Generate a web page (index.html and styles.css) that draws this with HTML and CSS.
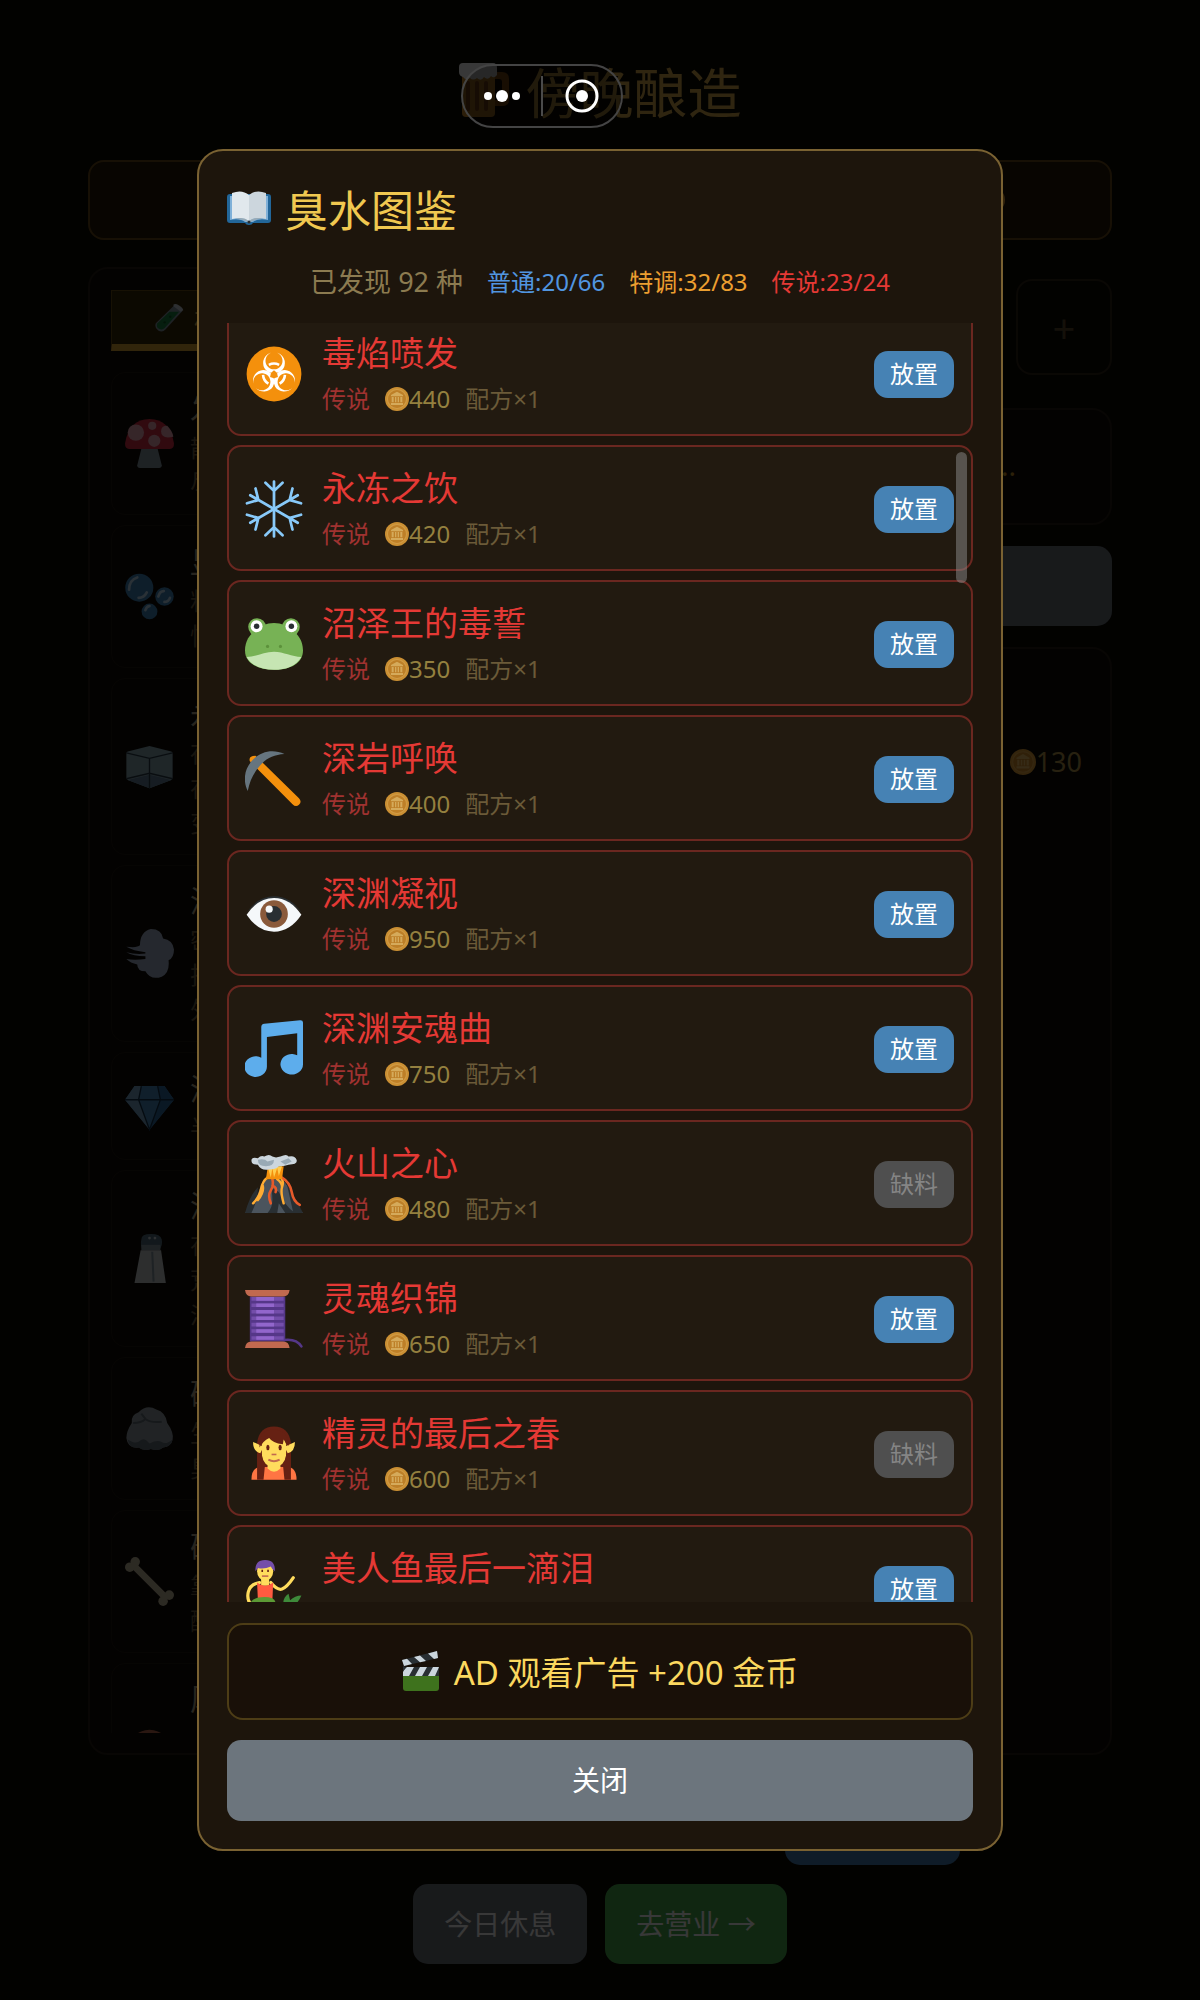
FILE: index.html
```html
<!DOCTYPE html>
<html lang="zh-CN">
<head>
    <meta charset="UTF-8">
    <meta name="viewport" content="width=device-width, initial-scale=1.0">
    <title>傍晚酿造</title>
    <link rel="stylesheet" href="styles.css">
</head>
<body>
    <!-- 图标 -->
    <svg class="sprite" aria-hidden="true">
        <symbol id="i-coin" viewBox="0 0 36 36">
            <circle cx="18" cy="18" r="18" fill="#e8a43a"/>
            <circle cx="18" cy="18" r="15" fill="#f0b350"/>
            <circle cx="18" cy="18" r="13.5" fill="#d9912c"/>
            <path d="M18 7l9 5v2H9v-2zM10 15h3v8h-3zM15 15h2v8h-2zM19 15h2v8h-2zM23 15h3v8h-3zM9 24h18v3H9z" fill="#f5c469"/>
        </symbol>
        <symbol id="i-book" viewBox="0 0 44 34">
            <path d="M3 3h38q3 0 3 3v23q0 3-3 3H26q-1 2-4 2t-4-2H3q-3 0-3-3V6q0-3 3-3z" fill="#226699"/>
            <path d="M3 5h38v24q-10-2-15 2h-8q-5-4-15-2z" fill="#7fb0d8"/>
            <path d="M5 2q10-4 17 2v26q-7-5-17-2z" fill="#e1e8ed"/>
            <path d="M39 2q-10-4-17 2v26q7-5 17-2z" fill="#ccd6dd"/>
            <path d="M8 28q8-3 14 2 6-5 14-2-9 0-14 4-5-4-14-4z" fill="#99aab5"/>
            <circle cx="22" cy="31" r="1.5" fill="#292f33"/>
        </symbol>
        <symbol id="i-bio" viewBox="0 0 36 36">
            <circle cx="18" cy="18" r="17" fill="#f4900c"/>
            <g id="bio-arm">
                <path d="M16.600 4.700A6.600 6.600 0 0 0 12 14.200a6.800 6.800 0 0 0 4.200 3.100l1.800-1.600 1.800 1.600a6.800 6.800 0 0 0 4.200-3.100A6.600 6.600 0 0 0 19.400 4.700a5.300 5.300 0 1 1-2.800 0z" fill="#fff"/>
            </g>
            <use href="#bio-arm" transform="rotate(120 18 18.500)"/>
            <use href="#bio-arm" transform="rotate(240 18 18.500)"/>
            <g fill="none" stroke="#fff" stroke-width="1.600">
                <path d="M14.800 12.300a7 7 0 0 1 6.400 0"/>
                <path d="M11.200 18.500a7 7 0 0 0 3.300 5.500"/>
                <path d="M24.800 18.500a7 7 0 0 1-3.300 5.500"/>
            </g>
            <circle cx="18" cy="18.500" r="1.500" fill="#f4900c"/>
        </symbol>
        <symbol id="i-snow" viewBox="0 0 36 36">
            <g fill="none" stroke="#88c9f9" stroke-width="1.700" stroke-linecap="round">
                <g id="flake">
                    <path d="M18 1v34M12.700 1.700L18 6.800l5.300-5.100M12.700 34.300L18 29.200l5.300 5.100"/>
                </g>
                <use href="#flake" transform="rotate(60 18 18)"/>
                <use href="#flake" transform="rotate(120 18 18)"/>
            </g>
        </symbol>
        <symbol id="i-frog" viewBox="0 0 36 36">
            <circle cx="7.500" cy="7.500" r="5.500" fill="#77b255"/>
            <circle cx="28.500" cy="7.500" r="5.500" fill="#77b255"/>
            <path d="M36 22c0 8-8 12-18 12S0 30 0 22C0 16 3 12 7 9c3-2 6-4 11-4s8 2 11 4c4 3 7 7 7 13z" fill="#77b255"/>
            <path d="M1 26C7 26 12 22.800 18 22.800S29 26 35 26C32 31.500 25.500 34 18 34S4 31.500 1 26z" fill="#c6e5b3"/>
            <circle cx="7.200" cy="7" r="3.700" fill="#fff"/>
            <circle cx="28.800" cy="7" r="3.700" fill="#fff"/>
            <circle cx="7.200" cy="7" r="1.700" fill="#292f33"/>
            <circle cx="28.800" cy="7" r="1.700" fill="#292f33"/>
            <circle cx="14" cy="19.500" r="1" fill="#5c913b"/>
            <circle cx="22" cy="19.500" r="1" fill="#5c913b"/>
        </symbol>
        <symbol id="i-pick" viewBox="0 0 36 36">
            <path d="M3 7q-1-3.500 3.500-3.500l27 26.500q2 2.200 0 4-2 1.800-4-.4z" fill="#f4900c"/>
            <path d="M24.500 2.500C17-1 9 1 4 7-1 13-1 20 1.700 25.500 3 19 5 14.500 9.500 9.500S18 3 24.500 2.500z" fill="#66757f"/>
        </symbol>
        <symbol id="i-eye" viewBox="0 0 36 36">
            <path d="M1 17Q8 7 18 7t17 10Q28 9 18 9T1 17z" fill="#292f33"/>
            <path d="M1 18.500Q8 8 18 8t17 10.500Q28 29 18 29T1 18.500z" fill="#f5f8fa"/>
            <circle cx="18" cy="18" r="8.600" fill="#8a5a3b"/>
            <circle cx="18" cy="18" r="4.900" fill="#292f33"/>
            <circle cx="15" cy="15" r="2.200" fill="#f5f8fa"/>
        </symbol>
        <symbol id="i-music" viewBox="0 0 36 36">
            <path d="M34.200.1L12 2.400q-1.900.2-1.900 2v19a7 6.400 0 1 0 3.500 5.600V10.500L32.400 8.300v13.600a7 6.400 0 1 0 3.600 5.500V1.500q0-1.500-1.800-1.400z" fill="#5dadec"/>
        </symbol>
        <symbol id="i-volcano" viewBox="0 0 36 36">
            <path d="M0 36Q6 30 8 24t4-9h11q4 4 6 10t7 11z" fill="#4b545d"/>
            <path d="M0 36q3-11 8-16 0 8-4 16zM14 36q3-3 3-8t-1-8l5 3q4 9 10 13h-6l-4-6-1 6zM26 18q6 10 10 18h-6z" fill="#292f33"/>
            <g fill="none" stroke-linecap="round" stroke-linejoin="round">
                <path d="M14 14q-3 2-4 7t-5 9M11 19q1 4-3 9M23 15q1 2 0 5t1 10M20 15q3 2 3 5" stroke="#ffac33" stroke-width="1.500"/>
                <path d="M17 15q1 4-1 7t0 8M17 19q3 1 2 4M23 14q5 3 6 9t5 8" stroke="#e75a2a" stroke-width="1.600"/>
            </g>
            <path d="M14 8l10-1-1 8H13z" fill="#f4900c"/>
            <path d="M14 7l2 7 1-6 1 6 2-6 1 5 2-6z" fill="#ffcc4d"/>
            <path d="M8 6q-4 0-4-2.500T8 2q2-2 4-1 3-2 5 0 2 1 5 0 4-2 5 0 4-1 5 2t-5 3q-3 1-6 1-2 2-6 2-5 1-7-3z" fill="#ccd6dd"/>
            <path d="M8 3q4-1 6 1l4-1q0 4-5 4T8 3zM22 4l5-2 2 2-4 2z" fill="#99aab5"/>
        </symbol>
        <symbol id="i-thread" viewBox="0 0 36 36">
            <path d="M24 31q8-1 11 4" fill="none" stroke="#553788" stroke-width="1.600" stroke-linecap="round"/>
            <path d="M3 4h22v28H3z" fill="#553788"/>
            <path d="M4 5.500h20M4 9.500h20M4 13.500h20M4 17.500h20M4 21.500h20M4 25.500h20M4 29.800h20" stroke="#744eaa" stroke-width="2.200"/>
            <path d="M7 5.500h11M7 9.500h11M7 13.500h11M7 17.500h11M7 21.500h11M7 25.500h11M7 29.800h11" stroke="#9266cc" stroke-width="2.200"/>
            <path d="M0 0h27.700q-.5 4-4 4H4Q.5 4 0 0zM0 36q.5-4 4-4h19.700q3.500 0 4 4z" fill="#c1694f"/>
        </symbol>
        <symbol id="i-elf" viewBox="0 0 36 36">
            <path d="M7.500 34V11Q9 1 18 1t10.500 10v23z" fill="#662113"/>
            <path d="M4 34q0-8 6-8h16q6 0 6 8z" fill="#ff7543"/>
            <path d="M14 24h8v3q-4 4-8 0z" fill="#ffdc5d"/>
            <path d="M5 10.500q0 6 4.500 7l2-4zM31 10.500q0 6-4.500 7l-2-4z" fill="#ffdc5d"/>
            <path d="M10.500 12Q11 6 18 6t7.500 6v7q-1 7-7.500 7t-7.500-7z" fill="#ffdc5d"/>
            <path d="M9 14Q8 3 18 3q9 0 9 10-2-2-3-4l-.5 3Q17 11 15 8q-4 2-6 6z" fill="#662113"/>
            <ellipse cx="14.200" cy="14" rx="1" ry="1.700" fill="#662113"/>
            <ellipse cx="21.800" cy="14" rx="1" ry="1.700" fill="#662113"/>
            <path d="M16.500 18.300h3" stroke="#c1694f" stroke-width="1"/>
            <path d="M14.500 21.500q3.500 2 7 0" fill="none" stroke="#c1694f" stroke-width="1.200"/>
            <path d="M7.500 18h3q0 4 2 6-.5 5-1 10h-4zM28.500 18h-3q0 4-2 6 .5 5 1 10h4z" fill="#662113"/>
        </symbol>
        <symbol id="i-mermaid" viewBox="0 0 36 36">
            <path d="M9 14q-6 1-7 6t2 8" fill="none" stroke="#ffdc5d" stroke-width="2" stroke-linecap="round"/>
            <path d="M16 14q4 5 7 4t7-7" fill="none" stroke="#ffdc5d" stroke-width="2" stroke-linecap="round"/>
            <path d="M10 10h5v6h-5z" fill="#ffdc5d"/>
            <path d="M7.500 14q3 2 5 2t5-2l-.5 11h-9z" fill="#ff5a40"/>
            <ellipse cx="12.500" cy="7" rx="5" ry="6" fill="#ffdc5d"/>
            <path d="M6.500 7Q6 0 12.500 0t6 7Q17 6 16 4q-4 2-8 1z" fill="#744eaa"/>
            <path d="M10.700 6v1.500M14.300 6v1.500" stroke="#662113" stroke-width="1"/>
            <path d="M10.500 10h4" stroke="#c1694f" stroke-width="1"/>
            <path d="M3 27q2-4 9-4t7 4q1 5-4 9H8z" fill="#5c9a35"/>
            <path d="M24 28q-1-4 3-7l1 4q3-3 7-3-2 5-6 7z" fill="#3e8a3a"/>
        </symbol>
        <symbol id="i-clap" viewBox="0 0 38 40">
            <path d="M1 25h36v12q0 3-3 3H4q-3 0-3-3z" fill="#3e721d"/>
            <path d="M1 16h36v9H1z" fill="#292f33"/>
            <path d="M1 20l4-4h7l-5 9H1zM18 16h7l-5 9h-7zM31 16h6l-4 9h-7z" fill="#ccd6dd"/>
            <path d="M0 9L35 0l1 7L2 15z" fill="#292f33"/>
            <path d="M0 9l5-1.300 5 5.300-8 2zM12 6l6-1.600 6 5.500-6 1.400zM26 2.400L35 0l1 7-4 1z" fill="#ccd6dd"/>
            <path d="M1 15l3 1-3 5z" fill="#292f33"/>
        </symbol>
        <symbol id="i-mug" viewBox="0 0 50 54">
            <path d="M34 9h9q7 0 7 7v21q0 6-7 6h-9v-6h6q3 0 3-3V19q0-3-3-3h-6z" fill="#9a5b16"/>
            <path d="M3 10h33v40q0 4-4 4H7q-4 0-4-4z" fill="#c98a2a"/>
            <path d="M9 20v26M18 20v26M27 20v26" stroke="#93501a" stroke-width="4" stroke-linecap="round"/>
            <path d="M4 0h30q4 0 4 5v7q-3 4-6 1-3 5-7 1-3 5-7 1-4 3-7 0-4 3-7-1-4-1-4-5V4q0-4 4-4z" fill="#fff"/>
        </symbol>
        <symbol id="i-tube" viewBox="0 0 36 36">
            <path d="M25 2l9 8L13 33q-4 4-9 1t-3-9z" fill="#8899a6"/>
            <path d="M18 11h12L12 31q-3 3-7 1t-2-7z" fill="#1f8a45"/>
            <path d="M23 2q2-2 7 1t5 6l-3 2-9-7z" fill="#ccd6dd"/>
            <circle cx="12" cy="24" r="1.500" fill="#0f5a28"/>
            <circle cx="19" cy="17" r="1.500" fill="#0f5a28"/>
        </symbol>
        <symbol id="i-mushroom" viewBox="0 0 36 36">
            <path d="M12 22h12l3 12q0 2-2 2H11q-2 0-2-2z" fill="#8899a6"/>
            <path d="M0 18Q3 0 18 0t18 18q0 4-3 4H3q-3 0-3-4z" fill="#dd2e44"/>
            <g fill="#f4abba">
                <circle cx="8" cy="10" r="6"/>
                <circle cx="20" cy="5" r="3"/>
                <circle cx="21.500" cy="16" r="4.500"/>
                <path d="M31 5q4 4 4.500 8-9 2-9-4 0-4 4.500-4z"/>
            </g>
        </symbol>
        <symbol id="i-bubble" viewBox="0 0 36 36">
            <g fill="#4289c1">
                <circle cx="10.500" cy="11.500" r="10.300"/>
                <circle cx="29" cy="18" r="6.800"/>
                <circle cx="18" cy="29" r="5.800"/>
            </g>
            <g fill="none" stroke="#bdddf4" stroke-width="2" stroke-linecap="round">
                <path d="M3 13q0-7 6-9M16 15q-2 4-6 4M24.500 18q1-4 4-4M33 19q-1 3-4 3M15 28q1-3 3-3"/>
            </g>
        </symbol>
        <symbol id="i-ice" viewBox="0 0 36 36">
            <path d="M18 3l16 4q1 0 1 2v17q0 1-1 2l-16 6-16-6q-1-1-1-2V9q0-2 1-2z" fill="#8cabb8"/>
            <path d="M18 24l16 4-16 6-16-6z" fill="#648299"/>
            <path d="M1 8l17 4 17-4M18 12v22M1 27l17-4 17 4" fill="none" stroke="#2c3e4a" stroke-width="1"/>
        </symbol>
        <symbol id="i-wind" viewBox="0 0 36 36">
            <path d="M1 13q8 1 10-1 0-10 8-12 8 0 9 7 7 1 8 8 0 6-4 8 1 9-5 12-8 3-12-4-6 0-6-5-5-1-8-4 6 1 14 0v-2Q6 20 1 17q7 2 14 1v-1Q6 16 1 13z" fill="#a8b6d0"/>
        </symbol>
        <symbol id="i-gem" viewBox="0 0 36 36">
            <path d="M7 3h22l7 10-18 22L0 13z" fill="#4a8fc4"/>
            <path d="M7 3h5l-2 10H0zM10 13l8 22L0 13z" fill="#7aa8cc"/>
            <path d="M29 3l7 10L18 35l8-22-2-10z" fill="#2f6da5"/>
            <path d="M0 13h36M12 3l-2 10 8 22 8-22-2-10" fill="none" stroke="#16334d" stroke-width="1"/>
        </symbol>
        <symbol id="i-salt" viewBox="0 0 36 36">
            <path d="M12 4q0-4 7-4t8 4-2 8H13q-2-4-1-8z" fill="#55707f"/>
            <path d="M12 8h14v4H12z" fill="#8899a6"/>
            <path d="M11.500 12h15L30 36H7z" fill="#ccd0d3"/>
            <path d="M20 13l1 22" stroke="#8899a6" stroke-width="1.500"/>
            <circle cx="18" cy="3" r="1" fill="#ccd6dd"/>
            <circle cx="22" cy="3" r="1" fill="#ccd6dd"/>
        </symbol>
        <symbol id="i-rock" viewBox="0 0 36 36">
            <path d="M5 14q-1-6 5-8 6-6 13-2 7 2 8 10 5 7 4 12-1 5-7 6-3 3-9 1-5 2-9-1-8 1-9-7 0-5 4-11z" fill="#97a1a9"/>
            <path d="M2 26q6 4 9 1t7 2q6-3 9-1t8-2q-1 5-7 6-3 3-9 1-5 2-9-1-7 1-8-6z" fill="#65717b"/>
            <path d="M6 14q6 0 9-3 4 3 12 2M15 11l-3-4" fill="none" stroke="#65717b" stroke-width="1.500"/>
        </symbol>
        <symbol id="i-bone" viewBox="0 0 36 36">
            <path d="M6 6l25 25" stroke="#c9bda0" stroke-width="5"/>
            <g fill="#c9bda0">
                <circle cx="3.500" cy="7.500" r="3.500"/>
                <circle cx="7.500" cy="3.500" r="3.500"/>
                <circle cx="28" cy="32.500" r="3.500"/>
                <circle cx="32.500" cy="28" r="3.500"/>
            </g>
        </symbol>
        <symbol id="i-nut" viewBox="0 0 36 36">
            <circle cx="18" cy="18" r="16" fill="#c1694f"/>
        </symbol>
    </svg>

    <div class="app">
        <h1 class="page-title"><svg class="mug"><use href="#i-mug"/></svg>傍晚酿造</h1>

        <div class="status-bar"><svg class="coin"><use href="#i-coin"/></svg></div>

        <main class="workbench">
            <section class="panel materials">
                <div class="tabs"><button class="tab active"><svg><use href="#i-tube"/></svg>材料</button></div>
                <ul class="material-list">
                    <li class="material h3"><svg><use href="#i-mushroom"/></svg><div><b>发</b><p>散</p><p>尽</p></div></li>
                    <li class="material h3"><svg><use href="#i-bubble"/></svg><div><b>显</b><p>粘</p><p>性</p></div></li>
                    <li class="material h4"><svg><use href="#i-ice"/></svg><div><b>永</b><p>存</p><p>在</p><p>变</p></div></li>
                    <li class="material h4"><svg><use href="#i-wind"/></svg><div><b>深</b><p>密</p><p>把</p><p>外</p></div></li>
                    <li class="material h2"><svg><use href="#i-gem"/></svg><div><b>深</b><p>半</p></div></li>
                    <li class="material h4"><svg><use href="#i-salt"/></svg><div><b>深</b><p>在</p><p>荒</p><p>淡</p></div></li>
                    <li class="material h3"><svg><use href="#i-rock"/></svg><div><b>硫</b><p>生</p><p>臭</p></div></li>
                    <li class="material h3"><svg><use href="#i-bone"/></svg><div><b>硬</b><p>靠</p><p>醋</p></div></li>
                    <li class="material h4"><svg><use href="#i-nut"/></svg><div><b>厚</b><p>&nbsp;</p><p>&nbsp;</p><p>&nbsp;</p></div></li>
                </ul>
            </section>

            <section class="brewing">
                <div class="slots"><button class="slot" aria-label="添加">+</button></div>
                <div class="panel hint">...</div>
                <button class="btn btn-gray" aria-label="酿造"></button>
                <div class="panel stock">
                    <span class="price"><svg class="coin"><use href="#i-coin"/></svg>130</span>
                </div>
            </section>
        </main>

        <div class="actions tools"><button class="btn btn-blue" aria-label="图鉴"></button></div>
        <div class="actions">
            <button class="btn btn-gray">今日休息</button>
            <button class="btn btn-green">去营业 →</button>
        </div>
    </div>

    <div class="overlay">
        <div class="modal" role="dialog" aria-labelledby="bookTitle">
            <h2 id="bookTitle"><svg class="book"><use href="#i-book"/></svg>臭水图鉴</h2>
            <div class="stats">
                <span class="found">已发现 92 种</span>
                <span class="common">普通:20/66</span>
                <span class="special">特调:32/83</span>
                <span class="legend">传说:23/24</span>
            </div>

            <div class="list-wrap">
                <ul class="drinks">
                    <li class="drink">
                        <svg><use href="#i-bio"/></svg>
                        <div class="info"><h3>毒焰喷发</h3><p><span class="rare">传说</span><span class="gold"><svg class="coin"><use href="#i-coin"/></svg>440</span><span>配方×1</span></p></div>
                        <button class="place">放置</button>
                    </li>
                    <li class="drink">
                        <svg><use href="#i-snow"/></svg>
                        <div class="info"><h3>永冻之饮</h3><p><span class="rare">传说</span><span class="gold"><svg class="coin"><use href="#i-coin"/></svg>420</span><span>配方×1</span></p></div>
                        <button class="place">放置</button>
                    </li>
                    <li class="drink">
                        <svg><use href="#i-frog"/></svg>
                        <div class="info"><h3>沼泽王的毒誓</h3><p><span class="rare">传说</span><span class="gold"><svg class="coin"><use href="#i-coin"/></svg>350</span><span>配方×1</span></p></div>
                        <button class="place">放置</button>
                    </li>
                    <li class="drink">
                        <svg><use href="#i-pick"/></svg>
                        <div class="info"><h3>深岩呼唤</h3><p><span class="rare">传说</span><span class="gold"><svg class="coin"><use href="#i-coin"/></svg>400</span><span>配方×1</span></p></div>
                        <button class="place">放置</button>
                    </li>
                    <li class="drink">
                        <svg><use href="#i-eye"/></svg>
                        <div class="info"><h3>深渊凝视</h3><p><span class="rare">传说</span><span class="gold"><svg class="coin"><use href="#i-coin"/></svg>950</span><span>配方×1</span></p></div>
                        <button class="place">放置</button>
                    </li>
                    <li class="drink">
                        <svg><use href="#i-music"/></svg>
                        <div class="info"><h3>深渊安魂曲</h3><p><span class="rare">传说</span><span class="gold"><svg class="coin"><use href="#i-coin"/></svg>750</span><span>配方×1</span></p></div>
                        <button class="place">放置</button>
                    </li>
                    <li class="drink">
                        <svg><use href="#i-volcano"/></svg>
                        <div class="info"><h3>火山之心</h3><p><span class="rare">传说</span><span class="gold"><svg class="coin"><use href="#i-coin"/></svg>480</span><span>配方×1</span></p></div>
                        <button class="place" disabled>缺料</button>
                    </li>
                    <li class="drink">
                        <svg><use href="#i-thread"/></svg>
                        <div class="info"><h3>灵魂织锦</h3><p><span class="rare">传说</span><span class="gold"><svg class="coin"><use href="#i-coin"/></svg>650</span><span>配方×1</span></p></div>
                        <button class="place">放置</button>
                    </li>
                    <li class="drink">
                        <svg><use href="#i-elf"/></svg>
                        <div class="info"><h3>精灵的最后之春</h3><p><span class="rare">传说</span><span class="gold"><svg class="coin"><use href="#i-coin"/></svg>600</span><span>配方×1</span></p></div>
                        <button class="place" disabled>缺料</button>
                    </li>
                    <li class="drink">
                        <svg><use href="#i-mermaid"/></svg>
                        <div class="info"><h3>美人鱼最后一滴泪</h3></div>
                        <button class="place">放置</button>
                    </li>
                </ul>
                <div class="scrollbar"></div>
            </div>

            <button class="ad-btn"><svg><use href="#i-clap"/></svg>AD 观看广告 +200 金币</button>
            <button class="close-btn">关闭</button>
        </div>
    </div>

    <!-- 小程序胶囊按钮 -->
    <div class="capsule">
        <button aria-label="更多">
            <svg width="36" height="16" viewBox="0 0 36 16" fill="#fff"><circle cx="4" cy="8" r="4"/><circle cx="18" cy="8" r="6"/><circle cx="32" cy="8" r="4"/></svg>
        </button>
        <i></i>
        <button aria-label="关闭小程序">
            <svg width="36" height="36" viewBox="0 0 36 36"><circle cx="18" cy="18" r="15" fill="none" stroke="#fff" stroke-width="3"/><circle cx="18" cy="18" r="6" fill="#fff"/></svg>
        </button>
    </div>
</body>
</html>
```

FILE: styles.css
```css
* {
    box-sizing: border-box;
    margin: 0;
    padding: 0;
}

body {
    font-family: 'Noto Sans', 'Noto Sans CJK SC', sans-serif;
    background-color: #0d0904;
    color: #fff;
    font-size: 24px;
}

ul {
    list-style: none;
}

button {
    font-family: inherit;
    border: none;
    color: #fff;
    cursor: pointer;
}

svg {
    display: block;
    flex-shrink: 0;
}

.sprite {
    position: absolute;
    width: 0;
    height: 0;
}

/* 酿造页面 */
.app {
    display: flex;
    flex-direction: column;
    min-height: 100vh;
    padding: 58px 88px 36px;
}

.page-title {
    display: flex;
    align-items: center;
    justify-content: center;
    gap: 17px;
    height: 64px;
    font-size: 54px;
    font-weight: 400;
    color: #d4a84b;
}

.mug {
    width: 50px;
    height: 54px;
}

.status-bar {
    display: flex;
    align-items: center;
    justify-content: flex-end;
    height: 80px;
    margin-top: 38px;
    padding-right: 105px;
    border: 2px solid #6b4a18;
    border-radius: 16px;
    background-color: #241805;
}

.coin {
    width: 26px;
    height: 26px;
}

.workbench {
    display: grid;
    grid-template-columns: 1fr 1fr;
    gap: 20px;
    flex: 1;
    min-height: 0;
    margin-top: 27px;
}

.panel {
    border: 2px solid #241c12;
    border-radius: 20px;
    background-color: #0f0b06;
}

.materials {
    height: 1488px;
    padding: 21px;
}

.tab {
    display: flex;
    align-items: center;
    gap: 10px;
    width: 200px;
    height: 61px;
    padding-left: 43px;
    background-color: #3a2a08;
    border: 1px solid #6b4f16;
    border-bottom: 7px solid #e0a834;
    color: #d4a84b;
    font-size: 26px;
}

.tab svg {
    width: 29px;
    height: 29px;
}

.material-list {
    display: flex;
    flex-direction: column;
    gap: 10px;
    height: 1361px;
    margin-top: 21px;
    overflow: hidden;
}

.material {
    display: flex;
    flex-shrink: 0;
    align-items: center;
    gap: 16px;
    padding: 0 13px;
    border: 1px solid #1f1810;
    border-radius: 14px;
    color: #b0a488;
}

.material svg {
    width: 49px;
    height: 49px;
}

.material b {
    display: block;
    font-size: 30px;
    font-weight: 400;
    line-height: 42px;
}

.material p {
    color: #6b5c40;
    line-height: 35px;
}

.h2 {
    height: 108px;
}

.h3 {
    height: 143px;
}

.h4 {
    height: 177px;
}

.brewing {
    display: flex;
    flex-direction: column;
    gap: 21px;
    padding-top: 12px;
}

.slots {
    display: flex;
    justify-content: flex-end;
    margin-bottom: 12px;
}

.slot {
    width: 96px;
    height: 96px;
    background: none;
    border: 2px solid #2e2416;
    border-radius: 16px;
    color: #5a4a2c;
    font-size: 40px;
}

.hint {
    height: 117px;
    padding: 37px 94px;
    color: #c9952c;
    font-size: 28px;
    line-height: 36px;
    text-align: right;
}

.stock {
    flex: 1;
    padding: 94px 28px;
}

.price {
    display: flex;
    align-items: center;
    justify-content: flex-end;
    color: #b5984c;
    font-size: 27px;
    line-height: 38px;
}

.actions {
    display: flex;
    justify-content: center;
    gap: 18px;
    margin-top: 19px;
}

.tools {
    justify-content: flex-end;
    margin-top: 30px;
    padding-right: 152px;
}

.btn {
    height: 80px;
    padding: 0 31px 3px;
    border-radius: 15px;
    font-size: 28px;
}

.btn-gray {
    background-color: #6c757d;
}

.btn-blue {
    width: 175px;
    background-color: #4682b4;
}

.btn-green {
    background-color: #4caf50;
}

/* 图鉴弹窗 */
.overlay {
    position: fixed;
    inset: 0;
    display: flex;
    align-items: center;
    justify-content: center;
    background-color: rgba(0, 0, 0, 0.78);
}

.modal {
    display: flex;
    flex-direction: column;
    width: calc(67% + 2px);
    height: 85.1vh;
    padding: 28px;
    border: 2px solid #7a6232;
    border-radius: 26px;
    background-color: #1d150c;
}

.modal h2 {
    display: flex;
    align-items: center;
    gap: 14px;
    height: 58px;
    font-size: 43px;
    font-weight: 400;
    color: #f0c850;
}

.book {
    width: 44px;
    height: 34px;
}

.stats {
    display: flex;
    align-items: center;
    justify-content: center;
    gap: 24px;
    height: 40px;
    margin: 23px 0;
}

.found {
    color: #8c7b50;
    font-size: 27px;
}

.common {
    color: #5195e0;
}

.special {
    color: #ec9f30;
}

.legend {
    color: #e53935;
}

.list-wrap {
    position: relative;
    flex: 1;
    min-height: 0;
    overflow: hidden;
}

.drinks {
    display: flex;
    flex-direction: column;
    gap: 9px;
    margin-top: -13px;
}

.drink {
    display: flex;
    flex-shrink: 0;
    align-items: center;
    gap: 19px;
    height: 126px;
    padding: 18px 17px 16px 16px;
    border: 2px solid #6b2720;
    border-radius: 14px;
    background-color: #221a10;
}

.drink > svg {
    width: 58px;
    height: 58px;
}

.info {
    flex: 1;
    height: 86px;
}

.info h3 {
    color: #e53935;
    font-size: 34px;
    font-weight: 400;
    line-height: 44px;
}

.info p {
    display: flex;
    gap: 15px;
    margin-top: 6px;
    color: #6b5a38;
    line-height: 36px;
}

.info .rare {
    color: #a03230;
}

.info .gold {
    display: flex;
    align-items: center;
    color: #94803f;
}

.info .coin {
    width: 24px;
    height: 24px;
    opacity: 0.85;
}

.place {
    width: 80px;
    height: 47px;
    padding-bottom: 1px;
    border-radius: 14px;
    background-color: #4682b4;
    font-size: 24px;
    line-height: 36px;
}

.place:disabled {
    background-color: #4f4f4f;
    color: #858585;
    cursor: not-allowed;
}

.scrollbar {
    position: absolute;
    top: 129px;
    right: 6px;
    width: 11px;
    height: 131px;
    border-radius: 6px;
    background-color: rgba(140, 140, 140, 0.5);
}

.ad-btn {
    display: flex;
    align-items: center;
    justify-content: center;
    gap: 14px;
    height: 97px;
    margin-top: 21px;
    padding-bottom: 2px;
    border: 2px solid #4d3d16;
    border-radius: 16px;
    background-color: #191008;
    color: #fbd85f;
    font-size: 33px;
}

.ad-btn svg {
    width: 38px;
    height: 40px;
}

.close-btn {
    height: 81px;
    margin-top: 20px;
    padding-bottom: 4px;
    border-radius: 14px;
    background-color: #6c757d;
    font-size: 28px;
}

.capsule {
    position: fixed;
    top: 64px;
    left: 461px;
    display: flex;
    align-items: center;
    width: 162px;
    height: 64px;
    border: 2px solid #444;
    border-radius: 32px;
    background-color: rgba(0, 0, 0, 0.3);
}

.capsule button {
    display: flex;
    flex: 1;
    align-items: center;
    justify-content: center;
    background: none;
}

.capsule i {
    width: 2px;
    height: 40px;
    background-color: #4a4a4a;
}
```
